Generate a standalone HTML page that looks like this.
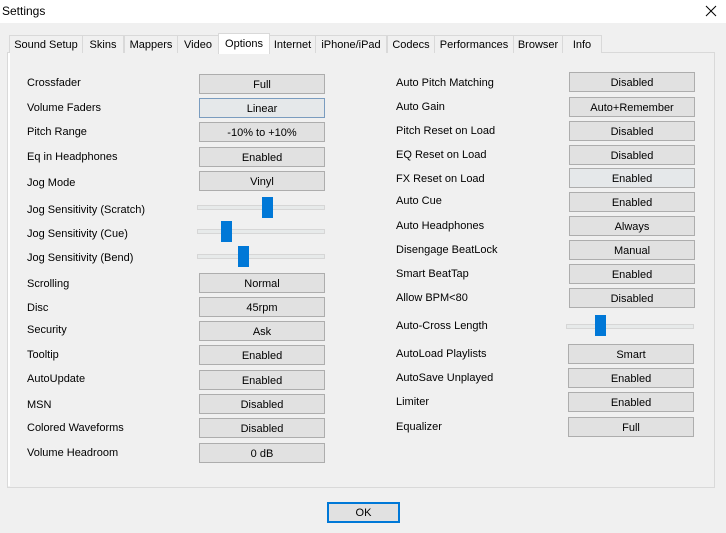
<!DOCTYPE html><html><head><style>
body{margin:0;width:726px;height:533px;background:#f0f0f0;font-family:"Liberation Sans",sans-serif;font-size:11px;color:#000;position:relative;overflow:hidden}
.t{position:absolute;top:0;left:0;width:726px;height:23px;background:#fff}
.a{position:absolute}
.tab{position:absolute;top:35px;height:17px;border:1px solid #d9d9d9;border-bottom:none;background:#f0f0f0;text-align:center;line-height:18px;font-size:11px}
.l{position:absolute;line-height:15px}
.b{position:absolute;width:124px;height:18px;border:1px solid #adadad;background:#e1e1e1;text-align:center;line-height:20px}
.tr{position:absolute;height:3px;border:1px solid #d6d6d6;background:#e7eaea;width:126px}
.th{position:absolute;width:11px;height:21px;background:#0078d7}
</style></head><body>
<div class="t"></div>
<div class="a" style="left:2px;top:4px;font-size:12px">Settings</div>
<svg class="a" style="left:705px;top:5px" width="12" height="12"><path d="M1 1L11 11M11 1L1 11" stroke="#000" stroke-width="1"/></svg>
<div class="a" style="left:7px;top:52px;width:706px;height:434px;border:1px solid #d9d9d9;background:#f0f0f0"></div>
<div class="tab" style="left:9px;width:72px">Sound Setup</div>
<div class="tab" style="left:82px;width:40px">Skins</div>
<div class="tab" style="left:124px;width:52px">Mappers</div>
<div class="tab" style="left:177px;width:40px">Video</div>
<div class="tab" style="left:269px;width:45px">Internet</div>
<div class="tab" style="left:315px;width:70px">iPhone/iPad</div>
<div class="tab" style="left:387px;width:46px">Codecs</div>
<div class="tab" style="left:434px;width:78px">Performances</div>
<div class="tab" style="left:513px;width:48px">Browser</div>
<div class="tab" style="left:562px;width:38px">Info</div>
<div class="tab" style="left:218px;top:33px;width:50px;height:20px;background:#fff;border-color:#d9d9d9;line-height:20px;z-index:2">Options</div>
<div class="a" style="left:8px;top:53px;width:2px;height:433px;background:#fff"></div>

<div class="l" style="left:27px;top:76px">Crossfader</div><div class="b" style="left:199px;top:74px">Full</div>
<div class="l" style="left:27px;top:101px">Volume Faders</div><div class="b" style="left:199px;top:98px;border-color:#7a9cbf;background:#e5e8ea">Linear</div>
<div class="l" style="left:27px;top:125px">Pitch Range</div><div class="b" style="left:199px;top:122px">-10% to +10%</div>
<div class="l" style="left:27px;top:150px">Eq in Headphones</div><div class="b" style="left:199px;top:147px">Enabled</div>
<div class="l" style="left:27px;top:176px">Jog Mode</div><div class="b" style="left:199px;top:171px">Vinyl</div>
<div class="l" style="left:27px;top:203px">Jog Sensitivity (Scratch)</div><div class="tr" style="left:197px;top:205px"></div><div class="th" style="left:262px;top:197px"></div>
<div class="l" style="left:27px;top:227px">Jog Sensitivity (Cue)</div><div class="tr" style="left:197px;top:229px"></div><div class="th" style="left:221px;top:221px"></div>
<div class="l" style="left:27px;top:251px">Jog Sensitivity (Bend)</div><div class="tr" style="left:197px;top:254px"></div><div class="th" style="left:238px;top:246px"></div>
<div class="l" style="left:27px;top:277px">Scrolling</div><div class="b" style="left:199px;top:273px">Normal</div>
<div class="l" style="left:27px;top:301px">Disc</div><div class="b" style="left:199px;top:297px">45rpm</div>
<div class="l" style="left:27px;top:323px">Security</div><div class="b" style="left:199px;top:321px">Ask</div>
<div class="l" style="left:27px;top:348px">Tooltip</div><div class="b" style="left:199px;top:345px">Enabled</div>
<div class="l" style="left:27px;top:372px">AutoUpdate</div><div class="b" style="left:199px;top:370px">Enabled</div>
<div class="l" style="left:27px;top:398px">MSN</div><div class="b" style="left:199px;top:394px">Disabled</div>
<div class="l" style="left:27px;top:421px">Colored Waveforms</div><div class="b" style="left:199px;top:418px">Disabled</div>
<div class="l" style="left:27px;top:446px">Volume Headroom</div><div class="b" style="left:199px;top:443px">0 dB</div>

<div class="l" style="left:396px;top:76px">Auto Pitch Matching</div><div class="b" style="left:569px;top:72px">Disabled</div>
<div class="l" style="left:396px;top:100px">Auto Gain</div><div class="b" style="left:569px;top:97px">Auto+Remember</div>
<div class="l" style="left:396px;top:124px">Pitch Reset on Load</div><div class="b" style="left:569px;top:121px">Disabled</div>
<div class="l" style="left:396px;top:148px">EQ Reset on Load</div><div class="b" style="left:569px;top:145px">Disabled</div>
<div class="l" style="left:396px;top:172px">FX Reset on Load</div><div class="b" style="left:569px;top:168px;background:#e5e8ea">Enabled</div>
<div class="l" style="left:396px;top:194px">Auto Cue</div><div class="b" style="left:569px;top:192px">Enabled</div>
<div class="l" style="left:396px;top:219px">Auto Headphones</div><div class="b" style="left:569px;top:216px">Always</div>
<div class="l" style="left:396px;top:243px">Disengage BeatLock</div><div class="b" style="left:569px;top:240px">Manual</div>
<div class="l" style="left:396px;top:267px">Smart BeatTap</div><div class="b" style="left:569px;top:264px">Enabled</div>
<div class="l" style="left:396px;top:291px">Allow BPM&lt;80</div><div class="b" style="left:569px;top:288px">Disabled</div>
<div class="l" style="left:396px;top:319px">Auto-Cross Length</div><div class="tr" style="left:566px;top:324px"></div><div class="th" style="left:595px;top:315px"></div>
<div class="l" style="left:396px;top:347px">AutoLoad Playlists</div><div class="b" style="left:568px;top:344px">Smart</div>
<div class="l" style="left:396px;top:371px">AutoSave Unplayed</div><div class="b" style="left:568px;top:368px">Enabled</div>
<div class="l" style="left:396px;top:395px">Limiter</div><div class="b" style="left:568px;top:392px">Enabled</div>
<div class="l" style="left:396px;top:420px">Equalizer</div><div class="b" style="left:568px;top:417px">Full</div>

<div class="a" style="left:327px;top:502px;width:69px;height:17px;border:2px solid #0078d7;background:#e1e1e1;text-align:center;line-height:19px">OK</div>
</body></html>
